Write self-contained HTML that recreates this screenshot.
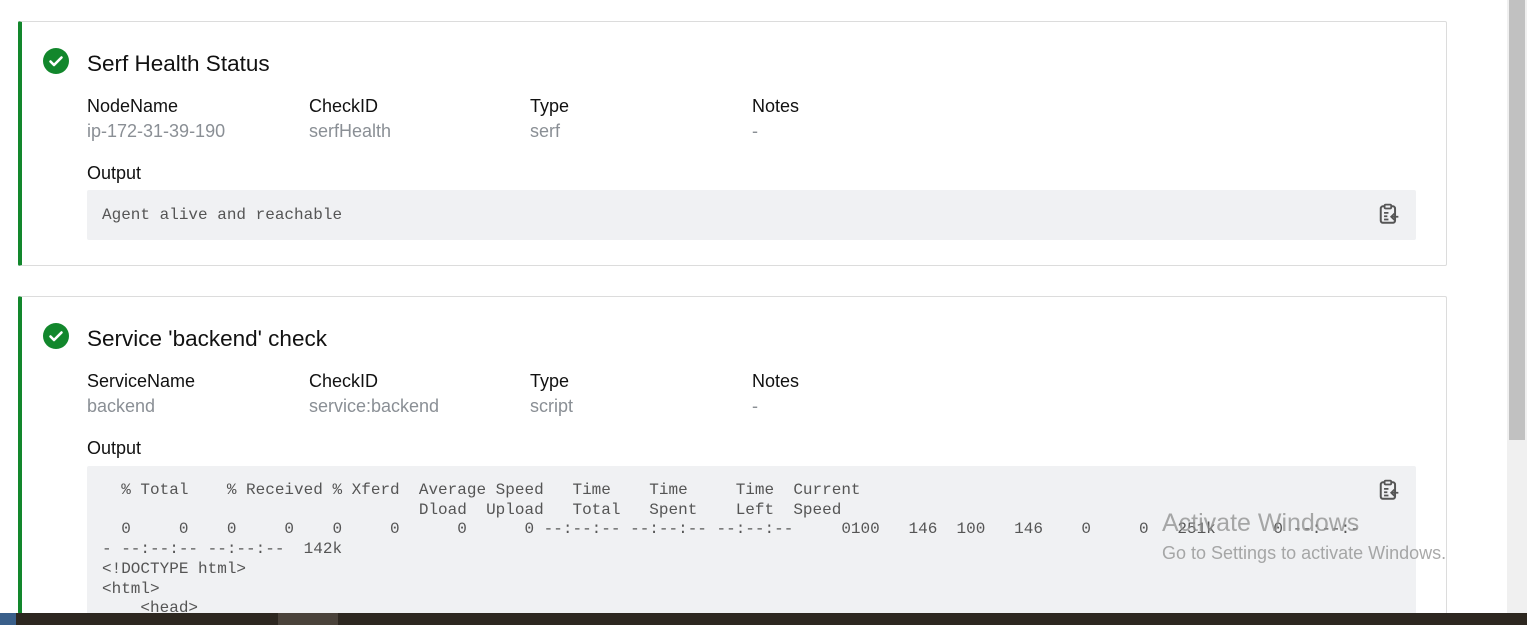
<!DOCTYPE html>
<html><head><style>
html,body{margin:0;padding:0;width:1527px;height:625px;overflow:hidden;background:#fff;font-family:"Liberation Sans",sans-serif;position:relative}
.card{position:absolute;left:18px;width:1424px;border:1px solid #dcdcdc;border-left:4px solid #12872c;border-radius:2px;background:#fff;overflow:hidden}
.ic{position:absolute;left:21px;width:26px;height:26px;border-radius:50%;background:#12872c}
.title{position:absolute;left:65px;font-size:22.5px;color:#111}
.lab{position:absolute;font-size:18px;color:#111}
.val{position:absolute;font-size:18px;color:#8a8f95}
.out{position:absolute;left:65px;width:1329px;background:#f0f1f3;border-radius:2px;font-family:"Liberation Mono",monospace;font-size:16px;color:#555;white-space:pre;line-height:19.7px;padding-left:15px;box-sizing:border-box;overflow:hidden}
.clip{position:absolute;right:16px;top:13px}
</style></head><body>
<div class="card" style="top:21px;height:243px">
 <div class="ic" style="top:26px"><svg width="26" height="26"><path d="M7.5 13.5l3.5 3.5 7.5-7.5" stroke="#fff" stroke-width="2.6" fill="none" stroke-linecap="round" stroke-linejoin="round"/></svg></div>
 <div class="title" style="top:29px">Serf Health Status</div>
 <div class="lab" style="left:65px;top:74px">NodeName</div><div class="val" style="left:65px;top:99px">ip-172-31-39-190</div>
 <div class="lab" style="left:287px;top:74px">CheckID</div><div class="val" style="left:287px;top:99px">serfHealth</div>
 <div class="lab" style="left:508px;top:74px">Type</div><div class="val" style="left:508px;top:99px">serf</div>
 <div class="lab" style="left:730px;top:74px">Notes</div><div class="val" style="left:730px;top:99px">-</div>
 <div class="lab" style="left:65px;top:141px">Output</div>
 <div class="out" style="top:168px;height:50px;line-height:50px">Agent alive and reachable<svg class="clip" width="22" height="22" viewBox="0 0 20 20"><rect x="2.5" y="3" width="13" height="15" rx="2" fill="none" stroke="#555" stroke-width="1.8"/><rect x="6" y="1.5" width="6" height="3.5" rx="1" fill="#f0f1f3" stroke="#555" stroke-width="1.6"/><path d="M5.5 9h4M5.5 12h3M5.5 15h4M18.5 12.5h-6M15 9.5l-3 3 3 3" stroke="#555" stroke-width="1.6" fill="none"/></svg></div>
</div>
<div class="card" style="top:296px;height:317px;border-bottom:none">
 <div class="ic" style="top:26px"><svg width="26" height="26"><path d="M7.5 13.5l3.5 3.5 7.5-7.5" stroke="#fff" stroke-width="2.6" fill="none" stroke-linecap="round" stroke-linejoin="round"/></svg></div>
 <div class="title" style="top:29px">Service 'backend' check</div>
 <div class="lab" style="left:65px;top:74px">ServiceName</div><div class="val" style="left:65px;top:99px">backend</div>
 <div class="lab" style="left:287px;top:74px">CheckID</div><div class="val" style="left:287px;top:99px">service:backend</div>
 <div class="lab" style="left:508px;top:74px">Type</div><div class="val" style="left:508px;top:99px">script</div>
 <div class="lab" style="left:730px;top:74px">Notes</div><div class="val" style="left:730px;top:99px">-</div>
 <div class="lab" style="left:65px;top:141px">Output</div>
 <div class="out" style="top:169px;height:160px;padding-top:15px">  % Total    % Received % Xferd  Average Speed   Time    Time     Time  Current
                                 Dload  Upload   Total   Spent    Left  Speed
  0     0    0     0    0     0      0      0 --:--:-- --:--:-- --:--:--     0100   146  100   146    0     0   251k      0 --:--:-
- --:--:-- --:--:--  142k
&lt;!DOCTYPE html&gt;
&lt;html&gt;
    &lt;head&gt;<svg class="clip" width="22" height="22" viewBox="0 0 20 20"><rect x="2.5" y="3" width="13" height="15" rx="2" fill="none" stroke="#555" stroke-width="1.8"/><rect x="6" y="1.5" width="6" height="3.5" rx="1" fill="#f0f1f3" stroke="#555" stroke-width="1.6"/><path d="M5.5 9h4M5.5 12h3M5.5 15h4M18.5 12.5h-6M15 9.5l-3 3 3 3" stroke="#555" stroke-width="1.6" fill="none"/></svg></div>
</div>
<div style="position:absolute;left:1162px;top:509px;font-size:25px;color:rgba(140,140,140,0.75)">Activate Windows</div>
<div style="position:absolute;left:1162px;top:543px;font-size:18px;color:rgba(140,140,140,0.75)">Go to Settings to activate Windows.</div>
<div style="position:absolute;left:1507px;top:0;width:20px;height:613px;background:#f0f0f0"></div>
<div style="position:absolute;left:1509px;top:0;width:16px;height:440px;background:#c1c1c1"></div>
<div style="position:absolute;left:0;top:613px;width:1527px;height:12px;background:#2d2720"></div>
<div style="position:absolute;left:278px;top:613px;width:60px;height:12px;background:#4a423a"></div>
<div style="position:absolute;left:0;top:613px;width:16px;height:12px;background:#3a5f8a"></div>
</body></html>
